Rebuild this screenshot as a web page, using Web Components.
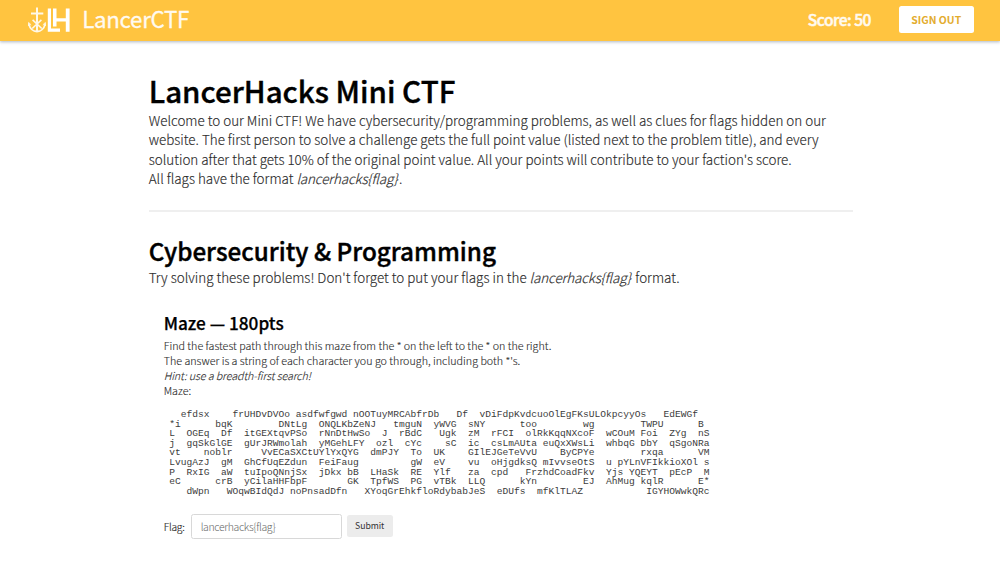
<!DOCTYPE html>
<html lang="en">
<head>
<meta charset="utf-8">
<title>LancerCTF</title>
<style>
  html, body { margin: 0; background: #fff; }
  body { font-family: "Noto Sans CJK SC", "Source Sans Pro", sans-serif; color: #2c2c2c; height: 580px; overflow: hidden; }
</style>
</head>
<body>
<ctf-app></ctf-app>
<script>
class CtfBase extends HTMLElement {
  constructor() {
    super();
    this.attachShadow({ mode: 'open' }).innerHTML = this.constructor.html;
  }
}

class CtfLogo extends CtfBase {
  static html = `
    <style>:host { display: block; width: 44px; height: 27px; } svg { display: block; }</style>
    <svg width="44" height="27" viewBox="27 6.5 44 27" fill="none" stroke="#fff8e8">
      <path d="M37 7V31M31 13H43.3" stroke-width="2"/>
      <path d="M29 23.6C29.8 28 33 31 37 31S44.2 28 45 23.6" stroke-width="1.8"/>
      <path d="M28.6 25.6V22L31.2 24.4M45.4 25.6V22L42.8 24.4" stroke-width="1"/>
      <path d="M32.6 19.4L41.8 28M41.4 19.4L32.2 28" stroke-width="1.6"/>
      <path d="M47.8 8H51V28H60V31.3H47.8Z" fill="#fff" stroke="none"/>
      <path d="M53 8H56.5V17.8H65.8V8H69.6V31.3H65.8V21H56.5V26H53Z" fill="#fff" stroke="none"/>
    </svg>`;
}

class CtfHeader extends CtfBase {
  static html = `
    <style>
      :host { display: flex; align-items: center; height: 40.5px; box-sizing: border-box; padding: 0 26.5px 0 27px;
        background: #ffc440; color: #fffaf0; box-shadow: 0 1px 3px rgba(60,80,110,.42); }
      .brand { margin-left: 11.3px; margin-top: -4px; font-size: 22.3px; line-height: 38px; letter-spacing: -.32px; white-space: nowrap; -webkit-text-stroke: .3px; }
      .score { margin-left: auto; margin-top: -2px; font-size: 15.6px; line-height: 38px; font-weight: 500; letter-spacing: -.5px; white-space: nowrap; -webkit-text-stroke: .5px; }
      button { margin: 0 0 1px 28px; width: 74.5px; height: 27px; padding: 0; border: 0; border-radius: 2.5px; background: #fff;
        font: 700 10.4px/27px "Noto Sans CJK SC", sans-serif; color: #e3ac2e; }
    </style>
    <ctf-logo></ctf-logo>
    <span class="brand">LancerCTF</span>
    <span class="score"><slot></slot></span>
    <button>SIGN OUT</button>`;
}

class CtfSection extends CtfBase {
  static html = `
    <style>
      :host { display: block; }
      .title { font-size: var(--size, 29.5px); line-height: 36px; font-weight: 500; color: #000; white-space: nowrap; -webkit-text-stroke: .4px #000; }
      .text { font-size: 13.43px; line-height: 19.25px; font-weight: 300; white-space: nowrap; margin-top: var(--gap, 3.3px); -webkit-text-stroke: .15px; }
    </style>
    <div class="title" role="heading"><slot name="title"></slot></div>
    <div class="text"><slot></slot></div>`;
}

class CtfMaze extends CtfBase {
  static html = `
    <style>
      :host { display: block; }
      pre { margin: 0; font: 9.58px/9.62px "Liberation Mono", monospace; color: #3c3c3c; }
    </style>
    <pre></pre>`;
  /* Each row is a list of column:letters runs on a 94-column grid. */
  static rows = [
    '2:efdsx 11:frUHDvDVOo 22:asdfwfgwd 32:nOOTuyMRCAbfrDb 50:Df 54:vDiFdpKvdcuoOlEgFKsULOkpcyyOs 86:EdEWGf',
    '0:*i 8:bqK 19:DNtLg 26:ONQLKbZeNJ 39:tmguN 46:yWVG 52:sNY 61:too 72:wg 82:TWPU 92:B',
    '0:L 3:OGEq 9:Df 13:itGEXtqvPSo 26:rNnDtHwSo 37:J 40:rBdC 47:Ugk 52:zM 56:rFCI 62:olRkKqqNXcoF 76:wCOuM 82:Foi 87:ZYg 92:nS',
    '0:j 3:gqSkGlGE 13:gUrJRWmolah 26:yMGehLFY 36:ozl 41:cYc 48:sC 52:ic 56:csLmAUta 65:euQxXWsLi 76:whbqG 82:DbY 87:qSgoNRa',
    '0:vt 6:noblr 16:VvECaSXCtUYlYxQYG 35:dmPJY 42:To 46:UK 52:GIlEJGeTeVvU 68:ByCPYe 82:rxqa 92:VM',
    '0:LvugAzJ 9:gM 13:GhCfUqEZdun 26:FeiFaug 42:gW 46:eV 52:vu 56:oHjgdksQ 65:mIvvseOtS 76:u 78:pYLnVFIkkioXOl 93:s',
    '0:P 3:RxIG 9:aW 13:tuIpoQNnjSx 26:jDkx 31:bB 35:LHaSk 42:RE 46:Ylf 52:za 56:cpd 62:FrzhdCoadFkv 76:Yjs 80:YQEYT 87:pEcP 93:M',
    '0:eC 8:crB 13:yCilaHHFbpF 31:GK 35:TpfWS 42:PG 46:vTBk 52:LLQ 61:kYn 72:EJ 76:AhMug 82:kqlR 92:E*',
    '3:dWpn 10:WOqwBIdQdJ 21:noPnsadDfn 34:XYoqGrEhkfloRdybabJeS 57:eDUfs 64:mfKlTLAZ 83:IGYHOWwkQRc'
  ];
  connectedCallback() {
    this.shadowRoot.querySelector('pre').textContent = CtfMaze.rows.map(row =>
      row.split(' ').reduce((line, run) => {
        const [col, letters] = run.split(':');
        return line.padEnd(+col) + letters;
      }, '')).join('\n');
  }
}

class CtfFlagForm extends CtfBase {
  static html = `
    <style>
      :host { display: flex; align-items: center; height: 25px; font-size: 10.3px; font-weight: 300; }
      label { width: 27px; letter-spacing: -.25px; -webkit-text-stroke: .15px; }
      input { box-sizing: border-box; width: 151px; height: 25px; padding: 0 9px; border: 1px solid #d8d8d8; border-radius: 2.5px;
        background: #fff; font: 300 10.5px "Noto Sans CJK SC", sans-serif; letter-spacing: -.36px; outline: 0; }
      input::placeholder { color: #666; opacity: 1; }
      button { width: 46px; height: 22px; margin-left: 5px; padding: 0; border: 0; border-radius: 2.5px; background: #ececec;
        font: 400 8.7px/22px "Noto Sans CJK SC", sans-serif; letter-spacing: -.05px; color: #333; }
    </style>
    <label>Flag:</label><input placeholder="lancerhacks{flag}"><button>Submit</button>`;
}

class CtfProblem extends CtfBase {
  static html = `
    <style>
      :host { display: block; padding-left: 15px; }
      .title { font-size: 17.2px; line-height: 24px; font-weight: 500; color: #000; -webkit-text-stroke: .25px #000; white-space: nowrap; }
      .text { margin-top: 2.6px; font-size: 10.72px; line-height: 15.1px; font-weight: 300; white-space: nowrap; -webkit-text-stroke: .12px; }
      ctf-maze { margin: 11.6px 0 17.3px 5.5px; }
    </style>
    <div class="title" role="heading"><slot name="title"></slot></div>
    <div class="text"><slot></slot></div>
    <ctf-maze></ctf-maze>
    <ctf-flag-form></ctf-flag-form>`;
}

class CtfApp extends CtfBase {
  static html = `
    <style>
      :host { display: block; }
      main { width: 704px; padding: 31.3px 0 0 148.7px; }
      hr { margin: 21.5px 0 0; border: 0; height: 2px; background: #efefef; }
      .cyber { --size: 24.25px; --gap: -.4px; margin-top: 21.1px; }
      ctf-problem { margin-top: 23.8px; }
      em { letter-spacing: -.12px; margin-right: 1.5px; }
      .hint { letter-spacing: -.1px; }
    </style>
    <ctf-header>Score: 50</ctf-header>
    <main>
      <ctf-section>
        <span slot="title">LancerHacks Mini CTF</span>
        Welcome to our Mini CTF! We have cybersecurity/programming problems, as well as clues for flags hidden on our<br>
        website. The first person to solve a challenge gets the full point value (listed next to the problem title), and every<br>
        solution after that gets 10% of the original point value. All your points will contribute to your faction's score.<br>
        All flags have the format <em>lancerhacks{flag}</em>.
      </ctf-section>
      <hr>
      <ctf-section class="cyber">
        <span slot="title">Cybersecurity &amp; Programming</span>
        Try solving these problems! Don't forget to put your flags in the <em>lancerhacks{flag}</em> format.
      </ctf-section>
      <ctf-problem>
        <span slot="title">Maze — 180pts</span>
        Find the fastest path through this maze from the * on the left to the * on the right.<br>
        The answer is a string of each character you go through, including both *'s.<br>
        <em class="hint">Hint: use a breadth-first search!</em><br>
        Maze:
      </ctf-problem>
    </main>`;
}

customElements.define('ctf-logo', CtfLogo);
customElements.define('ctf-header', CtfHeader);
customElements.define('ctf-section', CtfSection);
customElements.define('ctf-maze', CtfMaze);
customElements.define('ctf-flag-form', CtfFlagForm);
customElements.define('ctf-problem', CtfProblem);
customElements.define('ctf-app', CtfApp);
</script>
</body>
</html>
